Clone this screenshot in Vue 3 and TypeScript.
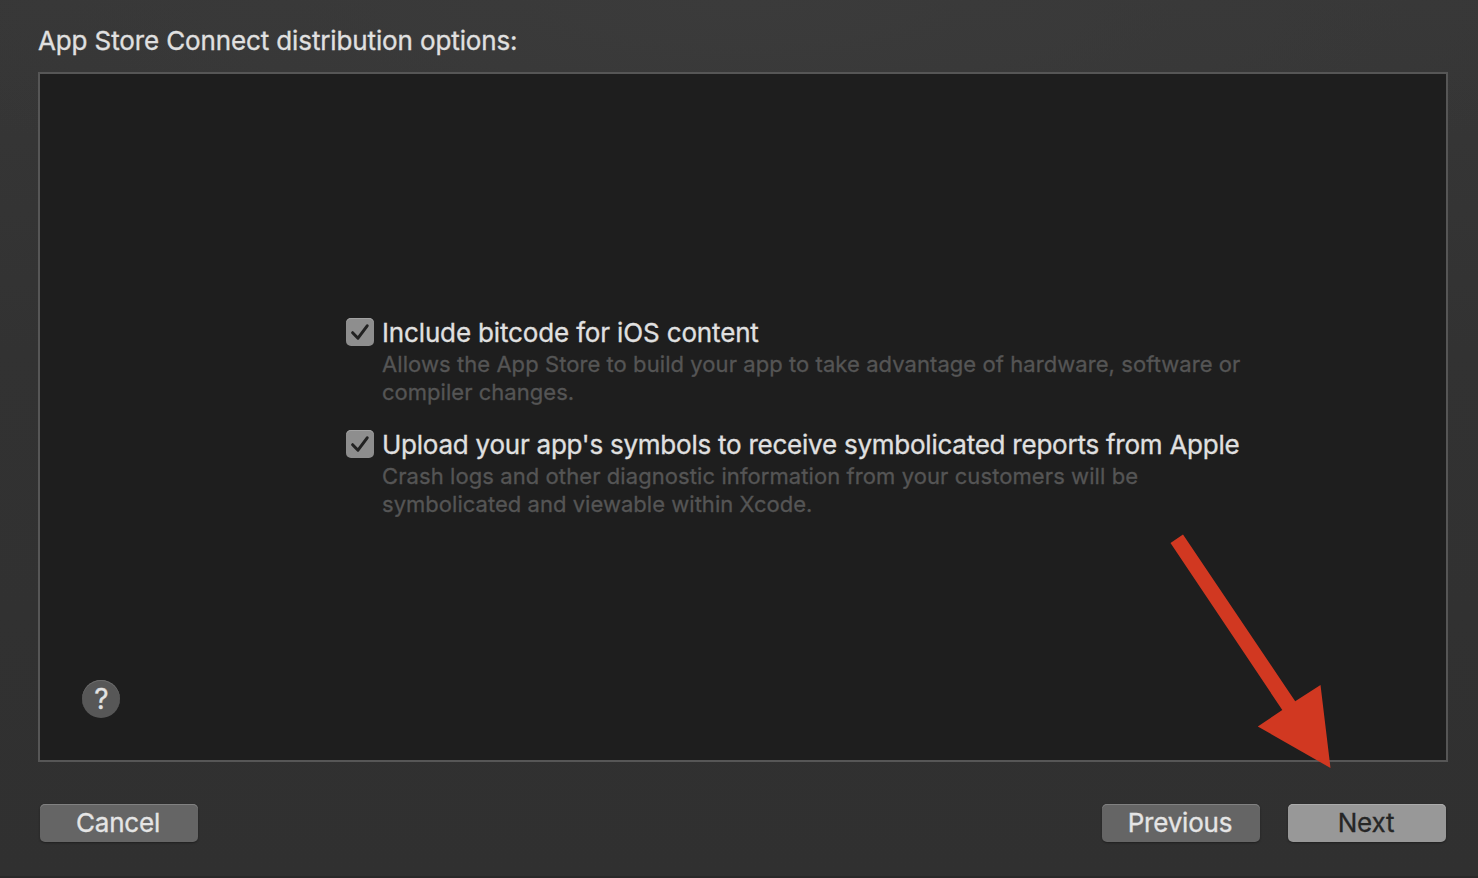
<script setup lang="ts">
interface Line { text: string; spacing: number }
interface Option { title: string; titleSpacing: number; lines: Line[] }

const options: Option[] = [
  {
    title: 'Include bitcode for iOS content',
    titleSpacing: -0.15,
    lines: [
      { text: 'Allows the App Store to build your app to take advantage of hardware, software or', spacing: 0.066 },
      { text: 'compiler changes.', spacing: 0.03 },
    ],
  },
  {
    title: "Upload your app's symbols to receive symbolicated reports from Apple",
    titleSpacing: -0.24,
    lines: [
      { text: 'Crash logs and other diagnostic information from your customers will be', spacing: 0.083 },
      { text: 'symbolicated and viewable within Xcode.', spacing: 0.03 },
    ],
  },
]
</script>

<template>
  <div class="sheet">
    <h1 class="heading"><span>App Store Connect distribution options:</span></h1>
    <main class="panel">
      <div class="options">
        <section v-for="option in options" :key="option.title" class="option">
          <svg class="check" viewBox="0 0 28 28" width="28" height="28">
            <path d="M6.6 14.7 L12 20.2 L21.2 7.8" />
          </svg>
          <div>
            <div class="title" :style="{ letterSpacing: option.titleSpacing + 'px' }">{{ option.title }}</div>
            <div v-for="line in option.lines" :key="line.text" class="desc" :style="{ letterSpacing: line.spacing + 'px' }">{{ line.text }}</div>
          </div>
        </section>
      </div>
      <button class="help">?</button>
    </main>
    <footer class="actions">
      <button class="btn cancel">Cancel</button>
      <button class="btn previous">Previous</button>
      <button class="btn next">Next</button>
    </footer>
    <svg class="arrow" viewBox="0 0 162 240" width="162" height="240">
      <path d="M.5 13 L13 4.5 L125.2 171.3 L150.5 155 L160.5 238 L87.8 196.5 L112.3 180 Z" />
    </svg>
  </div>
</template>

<style>
body { background: #323232; overflow: hidden; }
</style>

<style scoped>
.sheet {
  position: relative;
  box-sizing: border-box;
  width: 1478px;
  height: 878px;
  padding: 25px 30px 0 38px;
  overflow: hidden;
  background: radial-gradient(ellipse 900px 220px at 50% 0, #3b3b3b, transparent), linear-gradient(#373737, #323232 40%, #303030);
  box-shadow: inset 0 -2px #292929;
  font-family: Inter, "Liberation Sans", sans-serif;
  color: #e0e0e0;
  -webkit-text-stroke: 0.3px currentColor;
}
.heading { margin: 0; height: 47px; font-size: 26px; line-height: 32px; font-weight: 400; letter-spacing: -0.125px; white-space: nowrap; }
.panel {
  box-sizing: border-box;
  width: 1410px;
  height: 690px;
  border: 2px solid #565656;
  background: #1e1e1e;
  padding: 242px 0 0 306px;
  display: flex;
  flex-direction: column;
}
.options { display: flex; flex-direction: column; gap: 22px; }
.option { display: flex; gap: 8px; height: 90px; }
.check { margin-top: 2px; border-radius: 5px; background: #8e8e8e; box-shadow: inset 0 1px #a3a3a3; flex: none; }
.check path { fill: none; stroke: #222; stroke-width: 3; stroke-linecap: round; stroke-linejoin: round; }
.title { font-size: 26px; line-height: 34px; white-space: nowrap; width: max-content; }
.desc { font-size: 22px; line-height: 28px; color: #555; white-space: nowrap; width: max-content; }
.help {
  width: 38px; height: 38px; margin: 162px 0 0 -264px; padding: 0 0 0 1px; border: 0; border-radius: 50%;
  background: #575757; box-shadow: inset 0 1px #6c6c6c; color: #e3e3e3;
  font: 400 28px/38px Inter, "Liberation Sans", sans-serif;
}
.actions { display: flex; padding: 42px 2px 0; }
.btn {
  width: 158px; height: 38px; padding: 0 2px 0 0; border: 0; border-radius: 5px;
  background: #656565; box-shadow: inset 0 1px #818181, 0 1px 2px #202020; color: #e5e5e5;
  font: 400 26px/38px Inter, "Liberation Sans", sans-serif;
  letter-spacing: -0.2px;
}
.previous { margin-left: auto; }
.next { margin-left: 28px; background: #989898; box-shadow: inset 0 1px #acacac, 0 1px 2px #202020; color: #262626; }
.arrow { position: absolute; left: 1170px; top: 530px; overflow: visible; }
.arrow path { fill: #d13821; }
</style>
